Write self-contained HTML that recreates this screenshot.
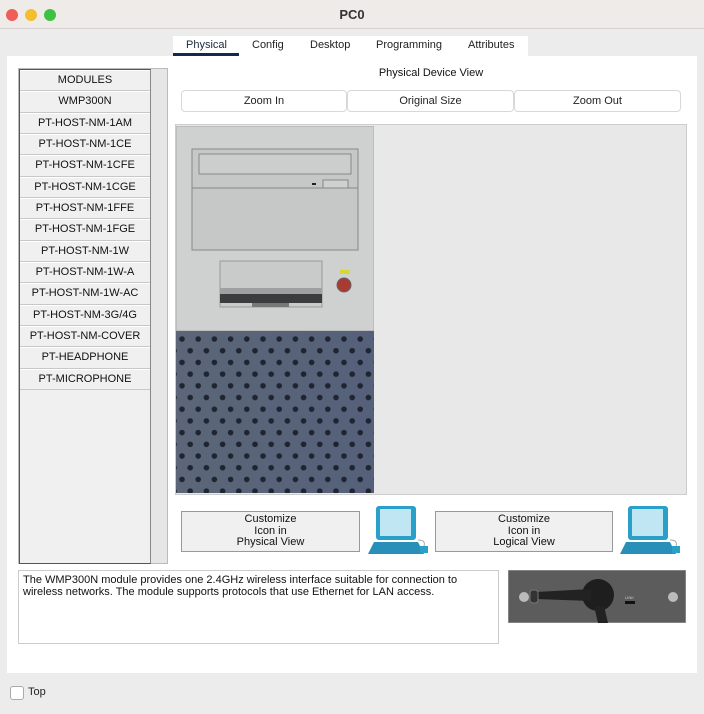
<!DOCTYPE html><html><head><style>
body{margin:0;width:704px;height:714px;background:#ececec;font-family:"Liberation Sans",sans-serif;position:relative;overflow:hidden}
.a{position:absolute}
.btn{position:absolute;background:#fff;border:1px solid #d8d8d8;border-radius:4px;font-size:11px;text-align:center;line-height:20px;color:#222}
.li{height:19.33px;border-bottom:1px solid #c8c8c8;background:#f0f0f0;font-size:11px;text-align:center;line-height:19px;color:#111;border-top:1px solid #fff}
.cb{position:absolute;background:#f0f0f0;border:1px solid #999;font-size:11px;text-align:center;line-height:11.5px;color:#111;padding-top:2px;box-sizing:border-box}
</style></head><body>
<div class="a" style="left:0;top:0;width:704px;height:28px;background:#efebe9;border-bottom:1px solid #d6d2d0"></div>
<div class="a" style="left:6px;top:9px;width:12px;height:12px;border-radius:6px;background:#ee5e56"></div>
<div class="a" style="left:25px;top:9px;width:12px;height:12px;border-radius:6px;background:#f5bd30"></div>
<div class="a" style="left:44px;top:9px;width:12px;height:12px;border-radius:6px;background:#3fc244"></div>
<div class="a" style="left:0;top:7px;width:704px;text-align:center;font-size:13px;font-weight:bold;color:#333">PC0</div>
<div class="a" style="left:173px;top:36px;width:355px;height:20px;background:#fff"></div>
<div class="a" style="left:173px;top:53px;width:66px;height:4px;background:#0f2a4a"></div>
<div class="a" style="left:186px;top:39px;font-size:11px;color:#1a2a40">Physical</div>
<div class="a" style="left:252px;top:39px;font-size:11px;color:#222">Config</div>
<div class="a" style="left:310px;top:39px;font-size:11px;color:#222">Desktop</div>
<div class="a" style="left:376px;top:39px;font-size:11px;color:#222">Programming</div>
<div class="a" style="left:468px;top:39px;font-size:11px;color:#222">Attributes</div>
<div class="a" style="left:7px;top:56px;width:690px;height:617px;background:#fff"></div>
<div class="a" style="left:18px;top:68px;width:148px;height:494px;border:1px solid #bbb;background:#e6e6e6"></div>
<div class="a" style="left:19px;top:69px;width:130px;height:493px;border:1px solid #555;border-right:1px solid #888;background:#f0f0f0">
<div class="li">MODULES</div><div class="li">WMP300N</div><div class="li">PT-HOST-NM-1AM</div><div class="li">PT-HOST-NM-1CE</div><div class="li">PT-HOST-NM-1CFE</div><div class="li">PT-HOST-NM-1CGE</div><div class="li">PT-HOST-NM-1FFE</div><div class="li">PT-HOST-NM-1FGE</div><div class="li">PT-HOST-NM-1W</div><div class="li">PT-HOST-NM-1W-A</div><div class="li">PT-HOST-NM-1W-AC</div><div class="li">PT-HOST-NM-3G/4G</div><div class="li">PT-HOST-NM-COVER</div><div class="li">PT-HEADPHONE</div><div class="li">PT-MICROPHONE</div>
</div>
<div class="a" style="left:176px;top:67px;width:510px;text-align:center;font-size:11px;color:#111">Physical Device View</div>
<div class="btn" style="left:181px;top:90px;width:164px">Zoom In</div>
<div class="btn" style="left:347px;top:90px;width:165px">Original Size</div>
<div class="btn" style="left:514px;top:90px;width:165px">Zoom Out</div>
<div class="a" style="left:175px;top:124px;width:510px;height:369px;background:#e8e8e8;border:1px solid #ccc"></div>
<svg class="a" style="left:176px;top:126px" width="198" height="367">
<defs><pattern id="p" width="16.2" height="23.4" patternUnits="userSpaceOnUse" x="-4" y="210"><circle cx="10" cy="3" r="2.8" fill="#1e2430"/><circle cx="2" cy="14.7" r="2.8" fill="#1e2430"/><circle cx="18.2" cy="14.7" r="2.8" fill="#1e2430"/></pattern>
<linearGradient id="g" x1="0" x2="1"><stop offset="0" stop-color="#5c6678"/><stop offset="1" stop-color="#55607a"/></linearGradient></defs>
<rect width="198" height="205" fill="#cfd1d0" stroke="#aaa"/>
<rect x="16" y="23" width="166" height="101" fill="#c5c8c7" stroke="#888"/>
<rect x="23" y="28" width="152" height="20" fill="#cbcecd" stroke="#888"/>
<line x1="16" y1="62" x2="182" y2="62" stroke="#888"/>
<rect x="136" y="57" width="4" height="2" fill="#222"/>
<rect x="147" y="54" width="25" height="8" fill="#cfd1d0" stroke="#888"/>
<rect x="44" y="135" width="102" height="46" fill="#c8cbca" stroke="#999"/>
<rect x="44" y="162" width="102" height="6" fill="#9ea1a1"/>
<rect x="44" y="168" width="102" height="9" fill="#3a3c3e"/>
<rect x="76" y="177" width="37" height="4" fill="#777"/>
<rect x="164" y="144" width="10" height="4" fill="#d8d830"/>
<circle cx="168" cy="159" r="7" fill="#a83a32" stroke="#666"/>
<rect y="205" width="198" height="162" fill="url(#g)"/>
<rect y="205" width="198" height="162" fill="url(#p)"/>
</svg>
<div class="cb" style="left:181px;top:511px;width:179px;height:41px">Customize<br>Icon in<br>Physical View</div>
<div class="cb" style="left:435px;top:511px;width:178px;height:41px">Customize<br>Icon in<br>Logical View</div>
<svg class="a" style="left:366px;top:504px" width="66" height="54"><rect x="10" y="2" width="40" height="34" rx="3" fill="#2aa0c8"/><rect x="14" y="5" width="31" height="27" fill="#bfe6f2"/><path d="M8 38h44l6 12H2z" fill="#2890b8"/><rect x="54" y="42" width="8" height="7" fill="#2aa0c8"/><path d="M52 36q8 0 6 6" stroke="#aaa" fill="none"/></svg>
<svg class="a" style="left:618px;top:504px" width="66" height="54"><rect x="10" y="2" width="40" height="34" rx="3" fill="#2aa0c8"/><rect x="14" y="5" width="31" height="27" fill="#bfe6f2"/><path d="M8 38h44l6 12H2z" fill="#2890b8"/><rect x="54" y="42" width="8" height="7" fill="#2aa0c8"/><path d="M52 36q8 0 6 6" stroke="#aaa" fill="none"/></svg>
<div class="a" style="left:18px;top:570px;width:481px;height:74px;border:1px solid #ccc;background:#fff;font-size:11px;line-height:12px;padding:3px 4px;box-sizing:border-box;color:#111">The WMP300N module provides one 2.4GHz wireless interface suitable for connection to wireless networks. The module supports protocols that use Ethernet for LAN access.</div>
<svg class="a" style="left:508px;top:570px" width="178" height="53"><rect width="178" height="53" fill="#5c5c5c" stroke="#aaa"/><circle cx="16" cy="27" r="5" fill="#bbb"/><circle cx="165" cy="27" r="5" fill="#bbb"/><circle cx="90" cy="25" r="16" fill="#1e1e1e"/><path d="M28 22l55-3v12l-55-2z" fill="#222"/><rect x="22" y="20" width="8" height="13" rx="3" fill="#333" stroke="#777"/><path d="M86 36l4 17h10l-4-17z" fill="#222"/><rect x="117" y="31" width="10" height="3" fill="#111"/><text x="117" y="29" font-size="4" fill="#ccc">LINK</text></svg>
<div class="a" style="left:10px;top:686px;width:12px;height:12px;border:1px solid #aaa;border-radius:3px;background:#fff"></div>
<div class="a" style="left:28px;top:686px;font-size:11px;color:#222">Top</div>
</body></html>
